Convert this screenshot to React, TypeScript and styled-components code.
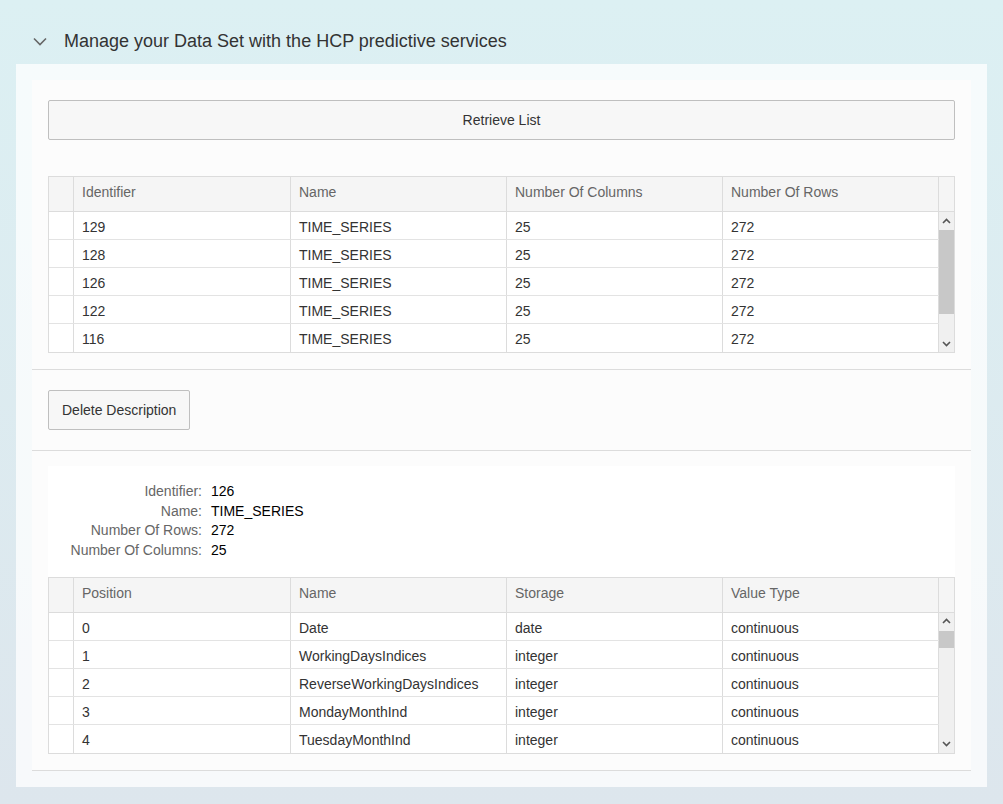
import React from 'react';
import styled, { createGlobalStyle } from 'styled-components';

const GlobalStyle = createGlobalStyle`
  html, body {
    margin: 0;
    padding: 0;
  }
  body {
    min-height: 804px;
    background: linear-gradient(to bottom, #dcf0f3 0%, #dde6ed 100%);
    font-family: "Liberation Sans", Arial, sans-serif;
    color: #333;
  }
`;

const Page = styled.div`
  width: 1003px;
  height: 804px;
  box-sizing: border-box;
  padding: 0 16px;
`;

const Header = styled.div`
  display: flex;
  align-items: center;
  height: 64px;
  box-sizing: border-box;
  padding: 29px 0 11px 17px;
  gap: 17px;
`;

const Title = styled.div`
  font-size: 18px;
  line-height: 24px;
  color: #333;
`;

const Panel = styled.div`
  background: rgba(255, 255, 255, 0.75);
  padding: 16px;
`;

const Inner = styled.div`
  background: #fcfcfc;
`;

const Section = styled.div<{ $top?: number; $bottom?: number }>`
  padding: ${(p) => p.$top ?? 20}px 16px ${(p) => p.$bottom ?? 16}px;
  border-bottom: 1px solid #dcdcdc;
  display: flex;
  flex-direction: column;
  align-items: flex-start;
`;

const Button = styled.button<{ $full?: boolean }>`
  box-sizing: border-box;
  height: 40px;
  width: ${(p) => (p.$full ? '100%' : 'auto')};
  padding: 0 13px;
  background: #f7f7f7;
  border: 1px solid #bfbfbf;
  border-radius: 2px;
  font-family: "Liberation Sans", Arial, sans-serif;
  font-size: 14px;
  color: #333;
  cursor: pointer;
`;

const Table = styled.div<{ $mt?: number }>`
  width: 100%;
  margin-top: ${(p) => p.$mt ?? 0}px;
  border: 1px solid #dcdcdc;
  box-sizing: border-box;
  background: #fff;
  font-size: 14px;
`;

const cols = '25px 217px 216px 216px 216px 1fr';

const HeadRow = styled.div`
  display: grid;
  grid-template-columns: ${cols};
  height: 35px;
  box-sizing: border-box;
  background: #f5f5f5;
  border-bottom: 1px solid #dcdcdc;
`;

const HeadCell = styled.div`
  border-right: 1px solid #dcdcdc;
  padding-left: 8px;
  line-height: 31px;
  color: #666;
  &:last-child {
    border-right: none;
  }
`;

const Body = styled.div`
  display: flex;
  height: 140px;
  overflow: hidden;
`;

const Rows = styled.div`
  flex: 1;
`;

const Row = styled.div`
  display: grid;
  grid-template-columns: 25px 217px 216px 216px 216px;
  height: 28px;
  box-sizing: border-box;
  border-bottom: 1px solid #e3e3e3;
  &:last-child {
    border-bottom: none;
  }
`;

const Cell = styled.div`
  border-right: 1px solid #dcdcdc;
  padding: 1px 0 0 8px;
  line-height: 28px;
  color: #333;
  white-space: nowrap;
  overflow: hidden;
`;

const SelCell = styled(Cell)`
  padding: 0;
`;

const ScrollBar = styled.div`
  width: 16px;
  background: #f0f0f0;
  display: flex;
  flex-direction: column;
`;

const ScrollArrow = styled.div`
  height: 17px;
  display: flex;
  align-items: center;
  justify-content: center;
  flex-shrink: 0;
`;

const Track = styled.div`
  flex: 1;
  padding-top: 1px;
`;

const Thumb = styled.div<{ $h: number }>`
  height: ${(p) => p.$h}px;
  background: #c8c8c8;
`;

const Form = styled.div`
  width: 100%;
  background: #fff;
  padding: 16px 0 16px;
  display: grid;
  grid-template-columns: 154px 1fr;
  column-gap: 9px;
  font-size: 14px;
  line-height: 19.7px;
`;

const Label = styled.div`
  text-align: right;
  color: #666;
`;

const Value = styled.div`
  color: #000;
`;

const Chevron = ({ up }: { up?: boolean }) => (
  <svg width="9" height="6" viewBox="0 0 9 6">
    <path
      d={up ? 'M1 5 L4.5 1.5 L8 5' : 'M1 1 L4.5 4.5 L8 1'}
      fill="none"
      stroke="#555"
      strokeWidth="1.6"
    />
  </svg>
);

const Scroller = ({ thumb }: { thumb: number }) => (
  <ScrollBar>
    <ScrollArrow>
      <Chevron up />
    </ScrollArrow>
    <Track>
      <Thumb $h={thumb} />
    </Track>
    <ScrollArrow>
      <Chevron />
    </ScrollArrow>
  </ScrollBar>
);

interface GridProps {
  headers: string[];
  rows: string[][];
  thumb: number;
  mt?: number;
}

const DataGrid: React.FC<GridProps> = ({ headers, rows, thumb, mt }) => (
  <Table $mt={mt}>
    <HeadRow>
      <HeadCell />
      {headers.map((h) => (
        <HeadCell key={h}>{h}</HeadCell>
      ))}
      <HeadCell />
    </HeadRow>
    <Body>
      <Rows>
        {rows.map((r, i) => (
          <Row key={i}>
            <SelCell />
            {r.map((c, j) => (
              <Cell key={j}>{c}</Cell>
            ))}
          </Row>
        ))}
      </Rows>
      <Scroller thumb={thumb} />
    </Body>
  </Table>
);

const dataSets = ['129', '128', '126', '122', '116'].map((id) => [id, 'TIME_SERIES', '25', '272']);

const variables = [
  ['0', 'Date', 'date', 'continuous'],
  ['1', 'WorkingDaysIndices', 'integer', 'continuous'],
  ['2', 'ReverseWorkingDaysIndices', 'integer', 'continuous'],
  ['3', 'MondayMonthInd', 'integer', 'continuous'],
  ['4', 'TuesdayMonthInd', 'integer', 'continuous'],
];

const details = [
  ['Identifier:', '126'],
  ['Name:', 'TIME_SERIES'],
  ['Number Of Rows:', '272'],
  ['Number Of Columns:', '25'],
];

export default function App() {
  return (
    <>
      <GlobalStyle />
      <Page>
        <Header>
          <svg width="14" height="9" viewBox="0 0 14 9">
            <path d="M1 1.5 L7 7.5 L13 1.5" fill="none" stroke="#666" strokeWidth="1.6" />
          </svg>
          <Title>Manage your Data Set with the HCP predictive services</Title>
        </Header>
        <Panel>
          <Inner>
            <Section>
              <Button $full>Retrieve List</Button>
              <DataGrid
                mt={36}
                headers={['Identifier', 'Name', 'Number Of Columns', 'Number Of Rows']}
                rows={dataSets}
                thumb={84}
              />
            </Section>
            <Section $bottom={20}>
              <Button>Delete Description</Button>
            </Section>
            <Section $top={15}>
              <Form>
                {details.map(([l, v]) => (
                  <React.Fragment key={l}>
                    <Label>{l}</Label>
                    <Value>{v}</Value>
                  </React.Fragment>
                ))}
              </Form>
              <DataGrid
                headers={['Position', 'Name', 'Storage', 'Value Type']}
                rows={variables}
                thumb={17}
              />
            </Section>
          </Inner>
        </Panel>
      </Page>
    </>
  );
}
